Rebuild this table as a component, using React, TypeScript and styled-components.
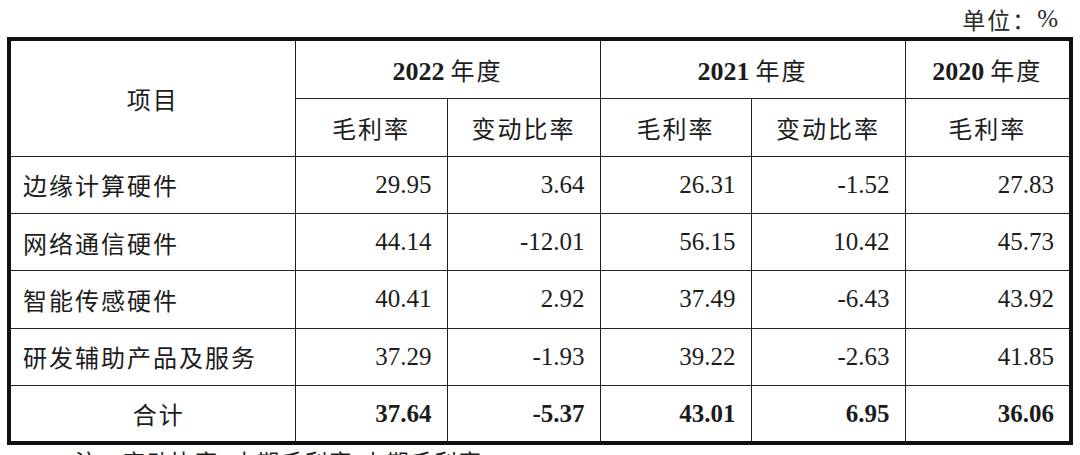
import styled, { createGlobalStyle } from 'styled-components';

const GlobalStyle = createGlobalStyle`
  html, body {
    margin: 0;
    padding: 0;
    background: #ffffff;
  }
  body {
    font-family: 'Noto Sans CJK SC', 'Liberation Serif', serif;
    color: #1c1c1c;
  }
`;

const Page = styled.div`
  width: 1080px;
  height: 455px;
  overflow: hidden;
  padding: 0 7px;
  box-sizing: border-box;
`;

const UnitLine = styled.div`
  height: 37px;
  display: flex;
  justify-content: flex-end;
  align-items: center;
  padding-right: 15px;
  font-size: 23px;
  letter-spacing: 2px;
  color: #2a2a2a;
`;

const Num = styled.span<{ $bold?: boolean }>`
  font-family: 'Liberation Serif', serif;
  font-weight: ${(p) => (p.$bold ? 700 : 400)};
  font-size: 25px;
  letter-spacing: 0;
`;

const Table = styled.table`
  width: 1066px;
  table-layout: fixed;
  border-collapse: collapse;
  border: 4px solid #111;
`;

const HeadCell = styled.th`
  border: 1px solid #222;
  font-weight: 400;
  font-size: 24px;
  letter-spacing: 2px;
  text-align: center;
  vertical-align: middle;
  padding: 0;
`;

const YearNum = styled.span`
  font-family: 'Liberation Serif', serif;
  font-weight: 700;
  font-size: 26px;
  letter-spacing: 0;
  margin-right: 6px;
`;

const Row = styled.tr<{ $h: number }>`
  height: ${(p) => p.$h}px;
`;

const LabelCell = styled.td<{ $center?: boolean }>`
  border: 1px solid #222;
  font-size: 24px;
  letter-spacing: 2px;
  text-align: ${(p) => (p.$center ? 'center' : 'left')};
  padding: 0 0 0 12px;
  white-space: nowrap;
`;

const ValueCell = styled.td<{ $bold?: boolean }>`
  border: 1px solid #222;
  font-family: 'Liberation Serif', serif;
  font-size: 25px;
  font-weight: ${(p) => (p.$bold ? 700 : 400)};
  text-align: right;
  padding: 0 15px 0 0;
`;

const Note = styled.div`
  padding: 4px 0 0 68px;
  font-size: 22px;
  line-height: 22px;
  letter-spacing: 2px;
  white-space: nowrap;
`;

type Item = {
  name: string;
  values: string[];
};

const items: Item[] = [
  { name: '边缘计算硬件', values: ['29.95', '3.64', '26.31', '-1.52', '27.83'] },
  { name: '网络通信硬件', values: ['44.14', '-12.01', '56.15', '10.42', '45.73'] },
  { name: '智能传感硬件', values: ['40.41', '2.92', '37.49', '-6.43', '43.92'] },
  { name: '研发辅助产品及服务', values: ['37.29', '-1.93', '39.22', '-2.63', '41.85'] },
];

const total = ['37.64', '-5.37', '43.01', '6.95', '36.06'];

export default function App() {
  return (
    <Page>
      <GlobalStyle />
      <UnitLine>
        单位：<Num>%</Num>
      </UnitLine>
      <Table>
        <colgroup>
          <col style={{ width: 286 }} />
          <col style={{ width: 152 }} />
          <col style={{ width: 153 }} />
          <col style={{ width: 151 }} />
          <col style={{ width: 154 }} />
          <col style={{ width: 166 }} />
        </colgroup>
        <thead>
          <Row $h={59}>
            <HeadCell rowSpan={2}>项目</HeadCell>
            <HeadCell colSpan={2}>
              <YearNum>2022</YearNum>年度
            </HeadCell>
            <HeadCell colSpan={2}>
              <YearNum>2021</YearNum>年度
            </HeadCell>
            <HeadCell>
              <YearNum>2020</YearNum>年度
            </HeadCell>
          </Row>
          <Row $h={58}>
            <HeadCell>毛利率</HeadCell>
            <HeadCell>变动比率</HeadCell>
            <HeadCell>毛利率</HeadCell>
            <HeadCell>变动比率</HeadCell>
            <HeadCell>毛利率</HeadCell>
          </Row>
        </thead>
        <tbody>
          {items.map((item) => (
            <Row $h={57.4} key={item.name}>
              <LabelCell>{item.name}</LabelCell>
              {item.values.map((v, i) => (
                <ValueCell key={i}>{v}</ValueCell>
              ))}
            </Row>
          ))}
          <Row $h={57.4}>
            <LabelCell $center>合计</LabelCell>
            {total.map((v, i) => (
              <ValueCell $bold key={i}>
                {v}
              </ValueCell>
            ))}
          </Row>
        </tbody>
      </Table>
      <Note>注：变动比率=本期毛利率-上期毛利率</Note>
    </Page>
  );
}
